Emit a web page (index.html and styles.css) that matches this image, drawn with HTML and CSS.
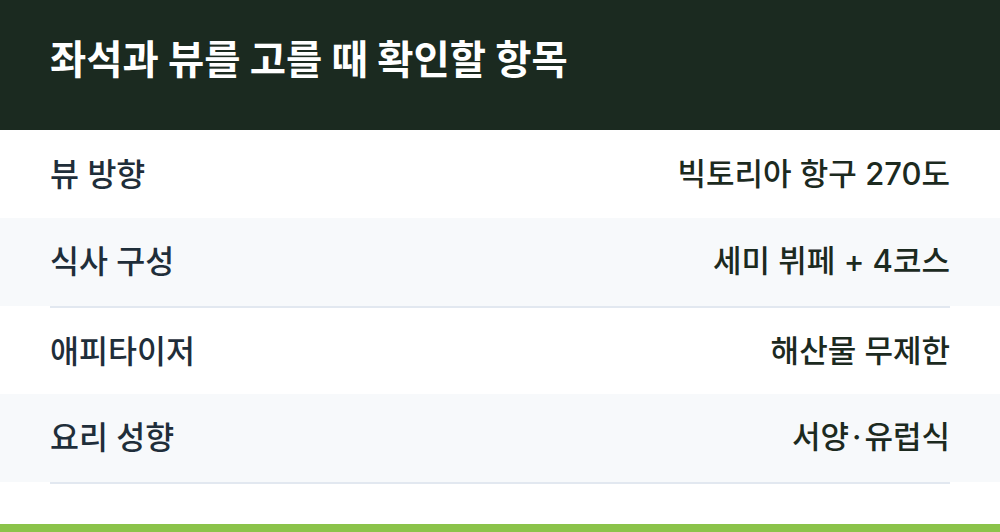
FILE: index.html
```html
<!DOCTYPE html>
<html lang="ko">
<head>
<meta charset="utf-8">
<link rel="stylesheet" href="styles.css">
</head>
<body>
<div class="card">
  <header class="head">
    <h1 class="title">좌석과 뷰를 고를 때 확인할 항목</h1>
  </header>
  <div class="rows">
    <div class="row">
      <div class="inner"><span class="label">뷰 방향</span><span class="value">빅토리아 항구 270도</span></div>
    </div>
    <div class="row alt">
      <div class="inner"><span class="label">식사 구성</span><span class="value">세미 뷔페 + 4코스</span></div>
    </div>
    <div class="row short">
      <div class="inner"><span class="label">애피타이저</span><span class="value">해산물 무제한</span></div>
    </div>
    <div class="row alt">
      <div class="inner"><span class="label">요리 성향</span><span class="value">서양<span class="dot">·</span>유럽식</span></div>
    </div>
  </div>
  <div class="spacer"></div>
  <div class="bar"></div>
</div>
</body>
</html>
```
FILE: styles.css
```css
* { box-sizing: border-box; }
html, body { margin: 0; padding: 0; }
body {
  width: 1000px;
  height: 532px;
  overflow: hidden;
  background: #ffffff;
  font-family: "Inter", "Noto Sans CJK KR", "Noto Sans", sans-serif;
}
.card {
  display: flex;
  flex-direction: column;
  height: 532px;
}
.head {
  height: 130px;
  background: #1b2a20;
  display: flex;
  align-items: center;
  padding: 0 50px;
}
.title {
  margin: 0;
  color: #ffffff;
  font-size: 39.4px;
  font-weight: 700;
  letter-spacing: 0;
  line-height: 1;
  padding-bottom: 8px;
}
.rows {
  display: flex;
  flex-direction: column;
}
.row {
  background: #ffffff;
}
.row.alt {
  background: linear-gradient(#f7f9fb, #f7f9fb) top / 100% 88px no-repeat;
}
.inner {
  margin: 0 50px;
  height: 88px;
  padding-bottom: 5px;
  display: flex;
  align-items: center;
  justify-content: space-between;
}
.row.short .inner { height: 86px; }
.row.alt .inner {
  height: 90px;
  padding-bottom: 7px;
  border-bottom: 2px solid #e2e8f0;
}
.label {
  font-size: 31.5px;
  font-weight: 500;
  color: #1f2e3a;
}
.value {
  font-size: 31px;
  font-weight: 500;
  color: #1c2a1f;
}
.dot {
  margin: 0 3px;
}
.spacer { flex: 1; }
.bar {
  height: 8px;
  background: #8bc34a;
}
```
